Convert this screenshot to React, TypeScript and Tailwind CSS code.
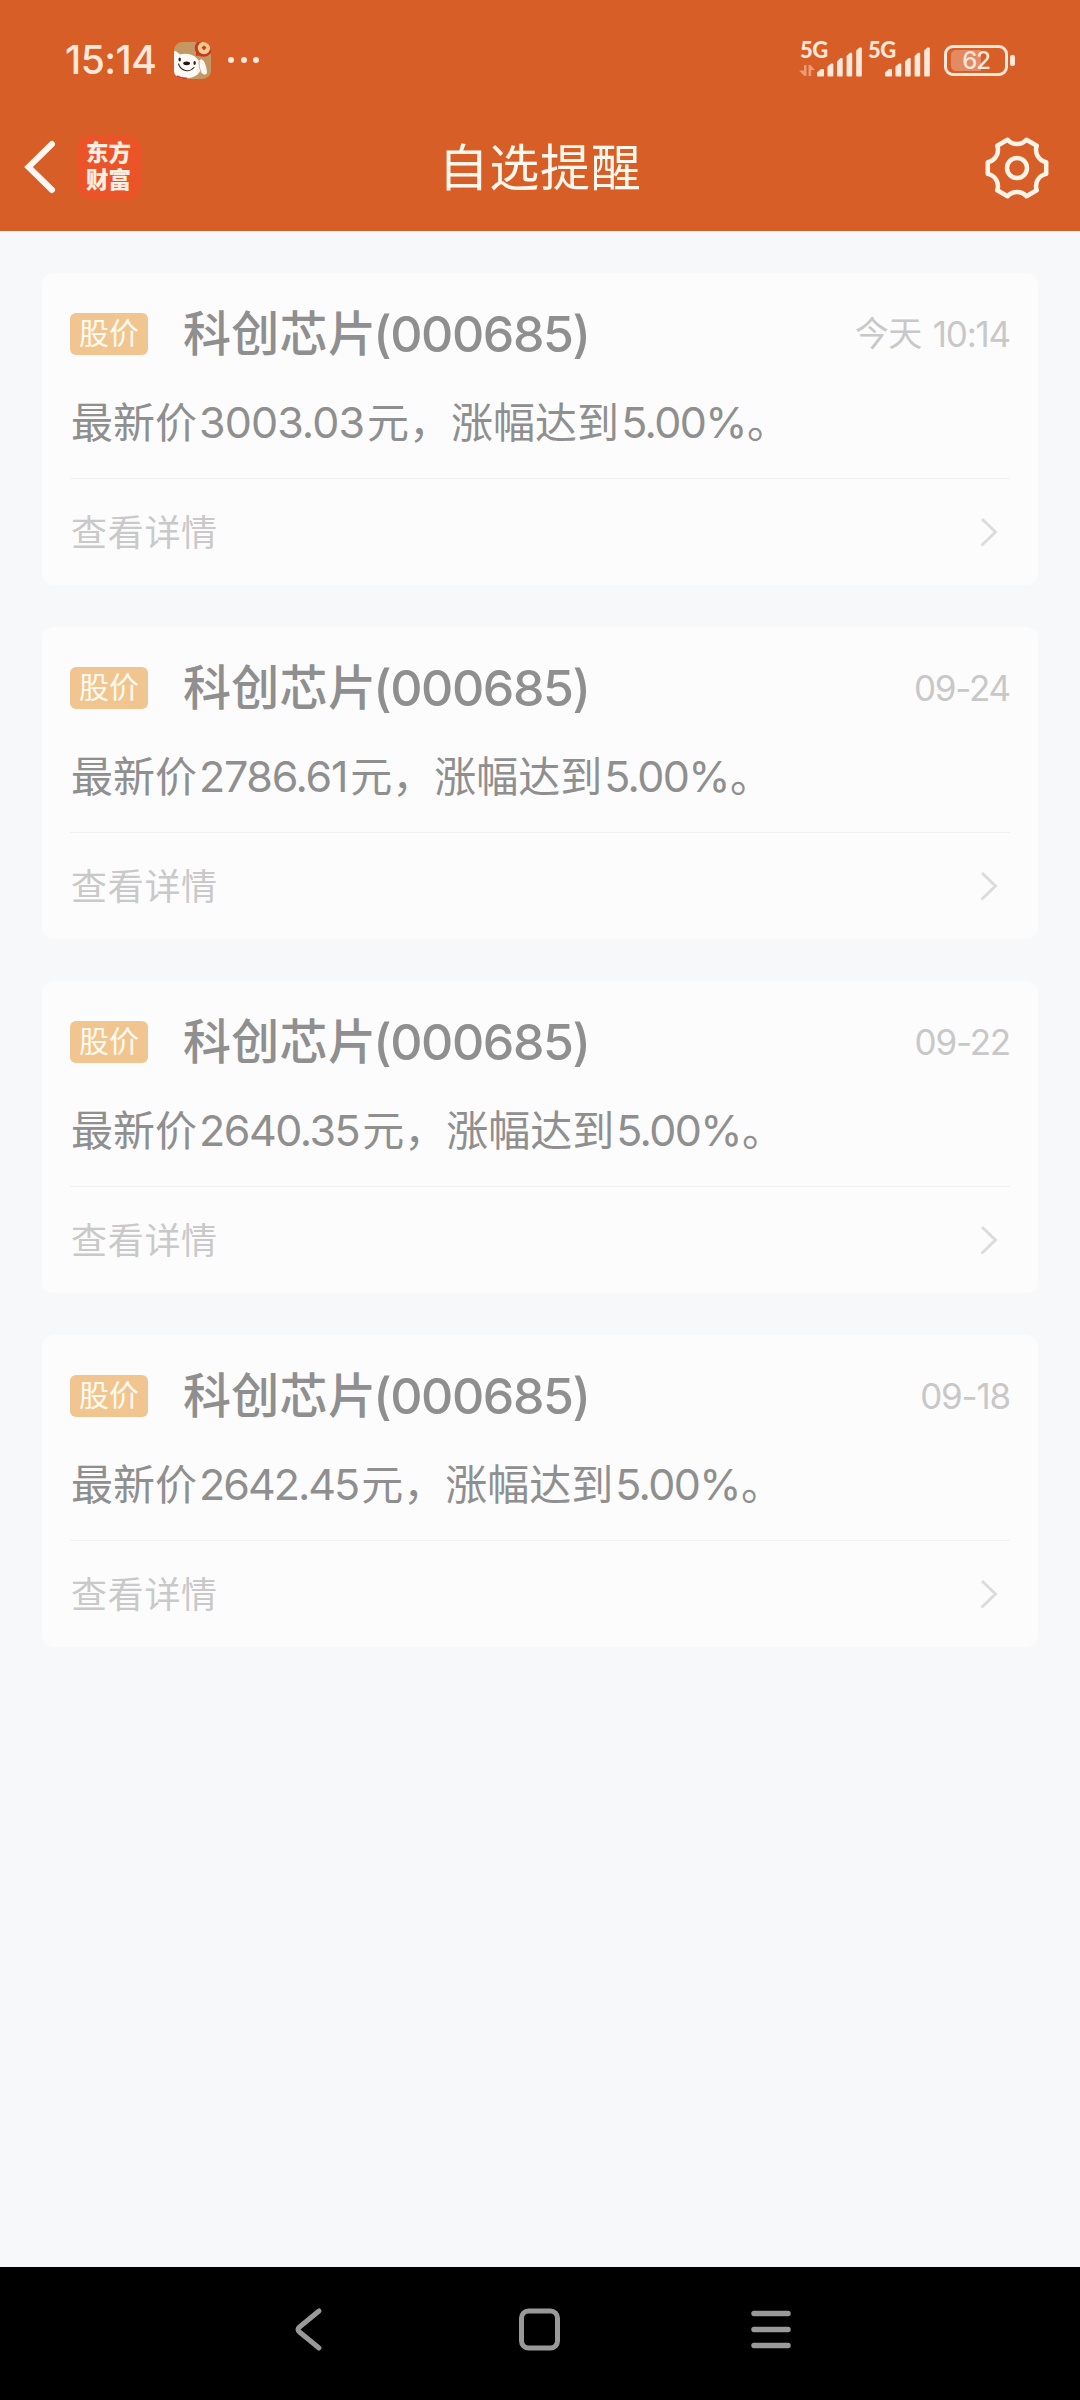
interface AlertRecord {
  id: number;
  tag: string;
  name: string;
  code: string;
  day?: string;
  time: string;
  price: string;
  priceTracking: string;
  change: string;
}

const alerts: AlertRecord[] = [
  { id: 1, tag: "股价", name: "科创芯片", code: "(000685)", day: "今天", time: "10:14", price: "3003.03", priceTracking: "tracking-[-0.9px]", change: "5.00%" },
  { id: 2, tag: "股价", name: "科创芯片", code: "(000685)", time: "09-24", price: "2786.61", priceTracking: "tracking-[-1.3px]", change: "5.00%" },
  { id: 3, tag: "股价", name: "科创芯片", code: "(000685)", time: "09-22", price: "2640.35", priceTracking: "tracking-[-1.5px]", change: "5.00%" },
  { id: 4, tag: "股价", name: "科创芯片", code: "(000685)", time: "09-18", price: "2642.45", priceTracking: "tracking-[-2px]", change: "5.00%" },
];

const JoyIcon = () => (
  <svg width="37" height="37" viewBox="0 0 37 37">
    <defs>
      <clipPath id="joy-clip">
        <rect width="37" height="37" rx="8.5" />
      </clipPath>
    </defs>
    <g clipPath="url(#joy-clip)">
      <rect width="37" height="37" fill="#c49763" />
      <path d="M0 9C3 9 4 11 6 12.500C11 11 19 12 23 16.500C24.500 19 25.500 19 26.500 17.500C30 16 33 26 33 31C31 34 28 32 26 29C24 34 17 37 9 36L0 33Z" fill="#fdfaf5" />
      <path d="M25.300 19C24.500 23 25.500 26 27 30" fill="none" stroke="#c9ae8c" strokeWidth="1" />
      <path d="M22 5L22 14L28 13Z" fill="#c23b22" />
      <circle cx="29.500" cy="6" r="8.800" fill="#c23b22" />
      <circle cx="30" cy="6" r="6.200" fill="#f6c98d" />
      <path d="M30 3.200L32.500 5.700L30 8.200L27.500 5.700Z" fill="#b8432a" />
      <ellipse cx="5.700" cy="17.500" rx="1.200" ry="1.900" fill="#2b2220" />
      <ellipse cx="20.600" cy="21" rx="1.200" ry="1.900" fill="#2b2220" />
      <ellipse cx="12.600" cy="21.300" rx="3.400" ry="1.900" fill="#1d1715" />
      <path d="M4.500 22C7 29 15 31 20 25.500" fill="none" stroke="#3a2e2a" strokeWidth="1.100" strokeLinecap="round" />
      <path d="M3 34C6 36 9 36.500 13 36.300" fill="none" stroke="#d23a2c" strokeWidth="1.600" />
    </g>
  </svg>
);

const Signal = ({ arrows = false }: { arrows?: boolean }) => (
  <div className="relative h-[34px] w-[63px]">
    <span className="absolute -top-px left-px font-['Lato'] text-[22px] font-black leading-[16px] tracking-[-0.6px]">5G</span>
    <svg className="absolute inset-0" width="63" height="34" viewBox="0 0 63 34" fill="currentColor">
      {arrows && (
        <g fill="#ee9a72">
          <path d="M5 22H7.500V33H5.500L0 27.500H5Z" />
          <path d="M9.500 33V22H11.500L16 27H12.200V33Z" />
        </g>
      )}
      <path d="M18 29.500L22 26H24.500Q25 26 25 26.500V32.500Q25 33.500 24 33.500H19Q18 33.500 18 32.500Z" />
      <path d="M28.500 23.500L32 20.500H33.500Q34.300 20.500 34.300 21.500V32.500Q34.300 33.500 33.300 33.500H29.500Q28.500 33.500 28.500 32.500Z" />
      <path d="M38 18.500L41.500 15H43Q43.700 15 43.700 16V32.500Q43.700 33.500 42.700 33.500H39Q38 33.500 38 32.500Z" />
      <path d="M47.600 13L51 9.700H52.500Q53.200 9.700 53.200 10.700V32.500Q53.200 33.500 52.200 33.500H48.600Q47.600 33.500 47.600 32.500Z" />
      <path d="M57.200 7.500L60.500 4.500H62Q62.800 4.500 62.800 5.500V32.500Q62.800 33.500 61.800 33.500H58.200Q57.200 33.500 57.200 32.500Z" />
    </svg>
  </div>
);

const Battery = () => (
  <div className="flex items-center gap-[2px]">
    <div className="relative flex h-[31px] w-[64px] items-center justify-center rounded-[9px] border-[3px] border-[#ffe7da]">
      <div className="absolute left-[4px] top-[2px] h-[21px] w-[30px] rounded-l-[5px] bg-[#e38a62]" />
      <span className="relative font-['Inter'] text-[24px] font-medium leading-[25px] tracking-[-1.2px]">62</span>
    </div>
    <div className="h-[11px] w-[5px] rounded-[2px] bg-[#ffe7da]" />
  </div>
);

const GearIcon = () => (
  <svg width="68" height="68" viewBox="-34 -34 68 68" fill="none" stroke="#fff3e8" strokeWidth="4.500" strokeLinejoin="round">
    <path d="M29.200 -5.900L29.200 5.900A12.500 12.500 0 0 0 19.750 22.300L9.460 28.260A12.500 12.500 0 0 0 -9.460 28.260L-19.750 22.300A12.500 12.500 0 0 0 -29.200 5.900L-29.200 -5.900A12.500 12.500 0 0 0 -19.750 -22.300L-9.460 -28.260A12.500 12.500 0 0 0 9.460 -28.260L19.750 -22.300A12.500 12.500 0 0 0 29.200 -5.900Z" />
    <circle r="10" />
  </svg>
);

const AlertCard = ({ alert }: { alert: AlertRecord }) => (
  <div className="h-[312px] rounded-[12px] bg-[#fcfcfc] px-7">
    <div className="flex h-[121px] items-center">
      <span className="flex h-[42px] w-[78px] items-center justify-center rounded-[6px] bg-[#f1c58f] pb-[5px] text-[30px] leading-none text-[#fffaf0]">
        {alert.tag}
      </span>
      <h2 className="ml-[35px] flex items-center leading-[60px] text-[#8f8f8f]">
        <span className="pb-[7px] text-[48px] font-medium tracking-[0.300px]">{alert.name}</span>
        <span className="-ml-[3px] font-['Inter'] text-[50px] font-medium tracking-[-1.4px]">{alert.code}</span>
      </h2>
      <div className="ml-auto flex items-center gap-[11px] leading-[40px] text-[#c8c8c8]">
        {alert.day && <span className="pb-[4px] text-[34px] tracking-[-0.5px]">{alert.day}</span>}
        <span className="font-['Inter'] text-[35px] tracking-[-1.2px]">{alert.time}</span>
      </div>
    </div>

    <div className="flex h-[85px] items-center border-b-[1px] border-[#f1f1f1] pb-[29px] leading-[56px] text-[#8f8f8f]">
      <span className="ml-px pb-[4px] text-[42px]">最新价</span>
      <span className={`ml-[2px] font-['Inter'] text-[43px] ${alert.priceTracking}`}>{alert.price}</span>
      <span className="ml-[3px] pb-[4px] text-[42px]">元，涨幅达到</span>
      <span className="ml-[2px] font-['Inter'] text-[43px] tracking-[-1.6px]">{alert.change}</span>
      <span className="ml-px pb-[4px] text-[42px]">。</span>
    </div>

    <div className="flex h-[106px] items-center justify-between pr-[12px]">
      <span className="ml-px pb-[5px] text-[36px] tracking-[0.700px] text-[#c9c9c9]">查看详情</span>
      <svg width="18" height="30" viewBox="0 0 18 30" fill="none" stroke="#dcdcde" strokeWidth="3">
        <path d="M2 2L15.500 15L1.500 28.500" />
      </svg>
    </div>
  </div>
);

export default function App() {
  return (
    <div className="flex h-[2400px] w-[1080px] flex-col overflow-hidden bg-[#f7f8fa] font-['Noto_Sans_CJK_SC',sans-serif]">

      {/* HEADER */}
      <header className="h-[231px] bg-[#d75f27] text-[#ffe7da]">
        <div className="flex h-[104px] items-center pl-[65px] pr-[65px] pt-[16px]">
          <span className="font-['Inter'] text-[39px] font-medium leading-[40px] tracking-[-0.5px]">15:14</span>
          <div className="ml-[18px]">
            <JoyIcon />
          </div>
          <div className="ml-[17px] flex gap-[6.5px]">
            <i className="size-[6px] rounded-full bg-[#ffe7da]" />
            <i className="size-[6px] rounded-full bg-[#ffe7da]" />
            <i className="size-[6px] rounded-full bg-[#ffe7da]" />
          </div>
          <div className="ml-auto flex items-center">
            <Signal arrows />
            <div className="ml-[5px]">
              <Signal />
            </div>
            <div className="ml-[14px]">
              <Battery />
            </div>
          </div>
        </div>

        <div className="grid h-[127px] grid-cols-[1fr_auto_1fr] items-center pl-[24px] pr-[29px]">
          <div className="flex items-center pb-[2px]">
            <svg width="32" height="54" viewBox="0 0 32 54" fill="none" stroke="#fff8f2" strokeWidth="6" strokeLinecap="round">
              <path d="M28 4L4.500 27L28 50" />
            </svg>
            <div className="ml-[21px] flex size-[64px] items-center justify-center rounded-[14px] bg-[#eb5428] pb-[4px]">
              <p className="w-[46px] break-all text-[22.5px] font-black leading-[27px] text-[#ffeee2]">东方财富</p>
            </div>
          </div>
          <h1 className="pb-[7px] pl-[5px] text-[50px] leading-[60px] tracking-[0.8px] text-[#fff6ec]">自选提醒</h1>
          <div className="flex justify-end">
            <GearIcon />
          </div>
        </div>
      </header>

      {/* ALERTS */}
      <main className="flex flex-1 flex-col gap-[42px] px-[42px] pt-[42px]">
        {alerts.map((alert) => (
          <AlertCard key={alert.id} alert={alert} />
        ))}
      </main>

      {/* NAVIGATION BAR */}
      <nav className="flex h-[133px] justify-between bg-black pl-[292px] pr-[286px] pt-[39px]">
        <svg width="33" height="46" viewBox="0 0 33 46" fill="none" stroke="#999" strokeWidth="5" strokeLinecap="round" strokeLinejoin="round">
          <path d="M27 5L7.500 21Q4.500 23.500 7.500 26L27 42" />
        </svg>
        <svg className="ml-[6px]" width="46" height="46" viewBox="0 0 46 46" fill="none" stroke="#999" strokeWidth="5">
          <rect x="4.500" y="5" width="36" height="37" rx="7" />
        </svg>
        <svg width="46" height="46" viewBox="0 0 46 46" fill="none" stroke="#999" strokeWidth="5.500" strokeLinecap="round">
          <path d="M6 7.500H40M6 23.500H40M6 39.500H40" />
        </svg>
      </nav>
    </div>
  );
}
